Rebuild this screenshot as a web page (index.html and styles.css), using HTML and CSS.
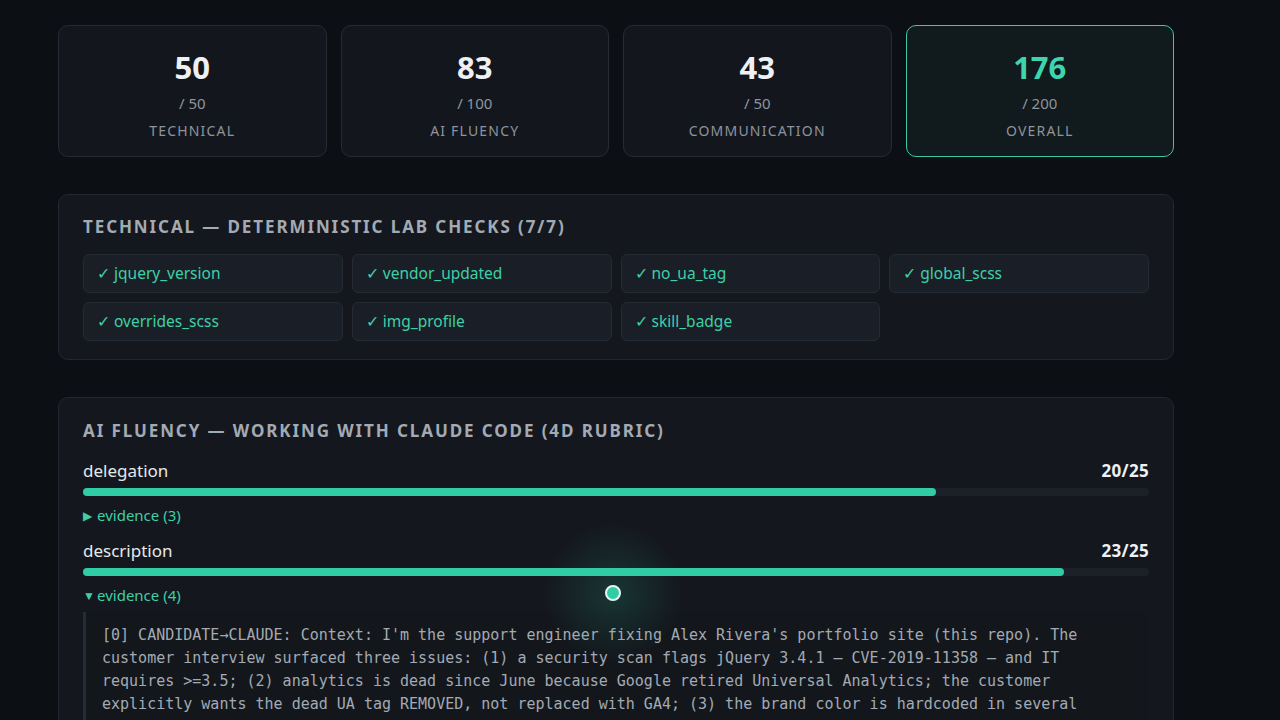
FILE: index.html
```html
<!DOCTYPE html>
<html lang="en">
<head>
    <meta charset="UTF-8">
    <meta name="viewport" content="width=device-width, initial-scale=1.0">
    <title>Candidate report</title>
    <link rel="stylesheet" href="styles.css">
</head>
<body>
    <div class="report">
        <div class="scores">
            <div class="score-card">
                <div class="score-num">50</div>
                <div class="score-max">/ 50</div>
                <div class="score-label">TECHNICAL</div>
            </div>
            <div class="score-card">
                <div class="score-num">83</div>
                <div class="score-max">/ 100</div>
                <div class="score-label">AI FLUENCY</div>
            </div>
            <div class="score-card">
                <div class="score-num">43</div>
                <div class="score-max">/ 50</div>
                <div class="score-label">COMMUNICATION</div>
            </div>
            <div class="score-card overall">
                <div class="score-num">176</div>
                <div class="score-max">/ 200</div>
                <div class="score-label">OVERALL</div>
            </div>
        </div>

        <div class="panel">
            <h3 class="panel-title">TECHNICAL — DETERMINISTIC LAB CHECKS (7/7)</h3>
            <div class="checks">
                <div class="check">✓ jquery_version</div>
                <div class="check">✓ vendor_updated</div>
                <div class="check">✓ no_ua_tag</div>
                <div class="check">✓ global_scss</div>
                <div class="check">✓ overrides_scss</div>
                <div class="check">✓ img_profile</div>
                <div class="check">✓ skill_badge</div>
            </div>
        </div>

        <div class="panel">
            <h3 class="panel-title title-ai">AI FLUENCY — WORKING WITH CLAUDE CODE (4D RUBRIC)</h3>

            <div class="dim">
                <div class="dim-head">
                    <span class="dim-name">delegation</span>
                    <span class="dim-score">20/25</span>
                </div>
                <div class="bar"><div class="bar-fill" style="width: 80%"></div></div>
                <div class="evidence-toggle"><span class="arrow">▶</span>evidence (3)</div>
            </div>

            <div class="dim">
                <div class="dim-head">
                    <span class="dim-name">description</span>
                    <span class="dim-score">23/25</span>
                </div>
                <div class="bar"><div class="bar-fill" style="width: 92%"></div></div>
                <div class="evidence-toggle"><span class="arrow">▼</span>evidence (4)</div>
                <div class="evidence">[0] CANDIDATE→CLAUDE: Context: I'm the support engineer fixing Alex Rivera's portfolio site (this repo). The
customer interview surfaced three issues: (1) a security scan flags jQuery 3.4.1 — CVE-2019-11358 — and IT
requires >=3.5; (2) analytics is dead since June because Google retired Universal Analytics; the customer
explicitly wants the dead UA tag REMOVED, not replaced with GA4; (3) the brand color is hardcoded in several</div>
            </div>
        </div>
    </div>

    <div class="cursor-glow"></div>
    <div class="cursor"></div>
</body>
</html>
```

FILE: styles.css
```css
html, body { margin: 0; padding: 0; }
body { font-family: 'Noto Sans', 'Open Sans', sans-serif; background-color: #0c0f14; color: #e4e7eb; height: 720px; overflow: hidden; position: relative; }
.report { width: 1116px; margin-left: 58px; padding-top: 25px; }

.scores { display: grid; grid-template-columns: repeat(4, 1fr); gap: 14px; }
.score-card { background-color: #13171d; border: 1px solid #262b33; border-radius: 10px; box-sizing: border-box; height: 132px; text-align: center; padding-top: 22px; }
.score-num { font-size: 31px; font-weight: 700; line-height: 38px; color: #eef0f3; }
.score-max { font-size: 15px; line-height: 20px; color: #8d949e; margin-top: 7px; }
.score-label { font-size: 14px; line-height: 20px; color: #8d949e; letter-spacing: 1.2px; margin-top: 8px; }
.overall { border-color: #3cc9a4; background-color: #111a1c; }
.overall .score-num { color: #3dd4ae; }

.panel { background-color: #14181e; border: 1px solid #232830; border-radius: 10px; margin-top: 37px; padding: 22px 24px 18px; }
.panel-title { margin: 0; font-size: 17px; line-height: 20px; font-weight: 700; letter-spacing: 1.9px; color: #a3aab4; }
.title-ai { margin-top: 1px; }

.checks { display: grid; grid-template-columns: repeat(4, 1fr); gap: 9px; margin-top: 17px; }
.check { background-color: #1a1f27; border: 1px solid #252b34; border-radius: 6px; padding: 9px 13px; font-size: 15.5px; line-height: 19px; color: #3fcfa8; }

.dim-head { display: flex; justify-content: space-between; align-items: baseline; margin-top: 19px; line-height: 22px; }
.dim + .dim .dim-head { margin-top: 14px; }
.dim-name { font-size: 17px; color: #e6e8eb; }
.dim-score { font-size: 17px; font-weight: 700; color: #eef0f3; letter-spacing: 0.3px; }
.bar { height: 8px; border-radius: 4px; background-color: #1c2129; margin-top: 6px; }
.bar-fill { height: 100%; border-radius: 4px; background-color: #2fcca6; }
.evidence-toggle { font-size: 15px; line-height: 20px; color: #3fcfa8; margin-top: 9px; }
.arrow { font-size: 12px; display: inline-block; width: 14px; vertical-align: 1px; }
.evidence { margin-top: 6px; border-left: 3px solid #262c35; padding: 12px 16px 12px 16px; font-family: 'DejaVu Sans Mono', 'Liberation Mono', monospace; font-size: 15px; line-height: 23px; color: #a3aab4; white-space: pre; background-color: #13171c; }

/* screen-recording cursor highlight */
.cursor-glow { position: absolute; left: 543px; top: 523px; width: 140px; height: 140px; border-radius: 50%; background: radial-gradient(circle, rgba(47, 204, 166, 0.16) 0%, rgba(47, 204, 166, 0.06) 45%, rgba(47, 204, 166, 0) 70%); pointer-events: none; }
.cursor { position: absolute; left: 605px; top: 585px; width: 12px; height: 12px; border-radius: 50%; background-color: #2fcca6; border: 2px solid #e9f7f3; pointer-events: none; }
```
